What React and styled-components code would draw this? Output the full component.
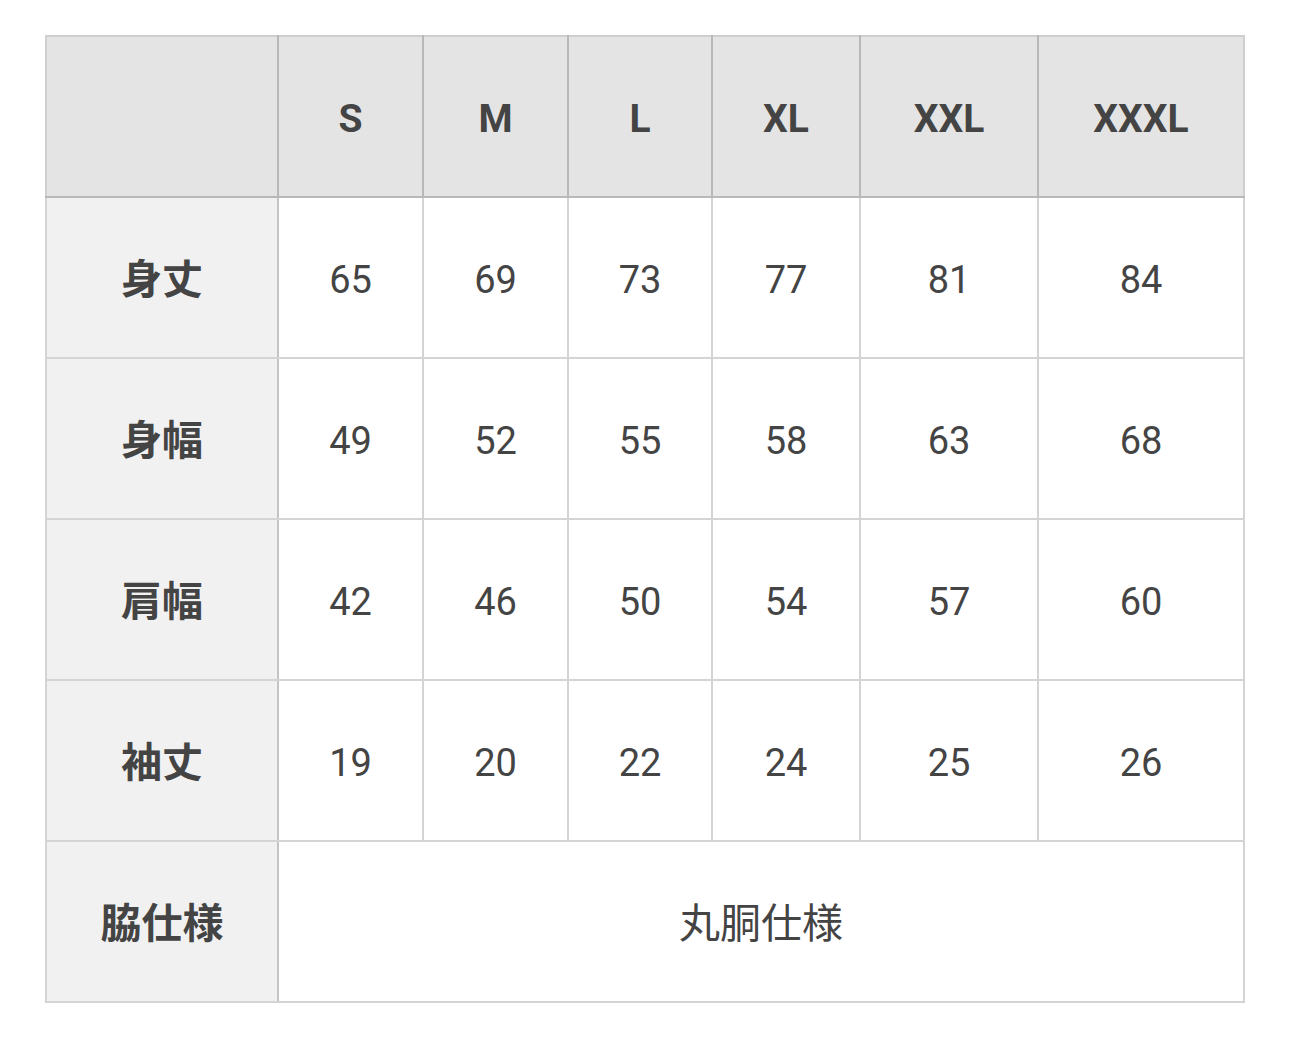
import React from 'react';
import styled, { createGlobalStyle } from 'styled-components';

const GlobalStyle = createGlobalStyle`
  body {
    margin: 0;
    background: #fff;
    font-family: Roboto, "Noto Sans CJK JP", sans-serif;
  }
`;

const Page = styled.div`
  padding: 35px 0 0 45px;
`;

const SizeTable = styled.table`
  border-collapse: collapse;
  table-layout: fixed;
  width: 1198px;
  color: #444;
`;

const HeadCell = styled.th`
  height: 155px;
  padding: 4px 0 0;
  background: #e4e4e4;
  border: 2px solid #b8b8b8;
  border-top-color: #cfcfcf;
  border-left-color: ${(p) => (p.$first ? '#d0d0d0' : '#b8b8b8')};
  border-right-color: ${(p) => (p.$last ? '#d0d0d0' : '#b8b8b8')};
  font-size: 39px;
  font-weight: 700;
  text-align: center;
`;

const LabelCell = styled.th`
  height: 155px;
  padding: 0 0 4px;
  background: #f1f1f1;
  border: 2px solid #d4d4d4;
  border-right-color: #c4c4c4;
  font-family: "Noto Sans CJK JP", sans-serif;
  font-size: 41px;
  font-weight: 700;
  text-align: center;
`;

const ValueCell = styled.td`
  padding: ${(p) => (p.$jp ? '0 0 4px' : '4px 0 0')};
  border: 2px solid #d4d4d4;
  text-align: center;
  font-family: ${(p) => (p.$jp ? '"Noto Sans CJK JP", sans-serif' : 'Roboto, sans-serif')};
  font-weight: 400;
  font-size: ${(p) => (p.$jp ? '41px' : '38px')};
`;

const sizes = ['S', 'M', 'L', 'XL', 'XXL', 'XXXL'];
const widths = [232, 145, 145, 144, 148, 178, 206];

const rows = [
  { label: '身丈', values: [65, 69, 73, 77, 81, 84] },
  { label: '身幅', values: [49, 52, 55, 58, 63, 68] },
  { label: '肩幅', values: [42, 46, 50, 54, 57, 60] },
  { label: '袖丈', values: [19, 20, 22, 24, 25, 26] },
];

export default function App() {
  return (
    <Page>
      <GlobalStyle />
      <SizeTable>
        <colgroup>
          {widths.map((w, i) => (
            <col key={i} style={{ width: w }} />
          ))}
        </colgroup>
        <thead>
          <tr>
            <HeadCell $first />
            {sizes.map((s, i) => (
              <HeadCell key={s} $last={i === sizes.length - 1}>
                {s}
              </HeadCell>
            ))}
          </tr>
        </thead>
        <tbody>
          {rows.map((r) => (
            <tr key={r.label}>
              <LabelCell>{r.label}</LabelCell>
              {r.values.map((v, i) => (
                <ValueCell key={i}>{v}</ValueCell>
              ))}
            </tr>
          ))}
          <tr>
            <LabelCell>脇仕様</LabelCell>
            <ValueCell $jp colSpan={6}>
              丸胴仕様
            </ValueCell>
          </tr>
        </tbody>
      </SizeTable>
    </Page>
  );
}
